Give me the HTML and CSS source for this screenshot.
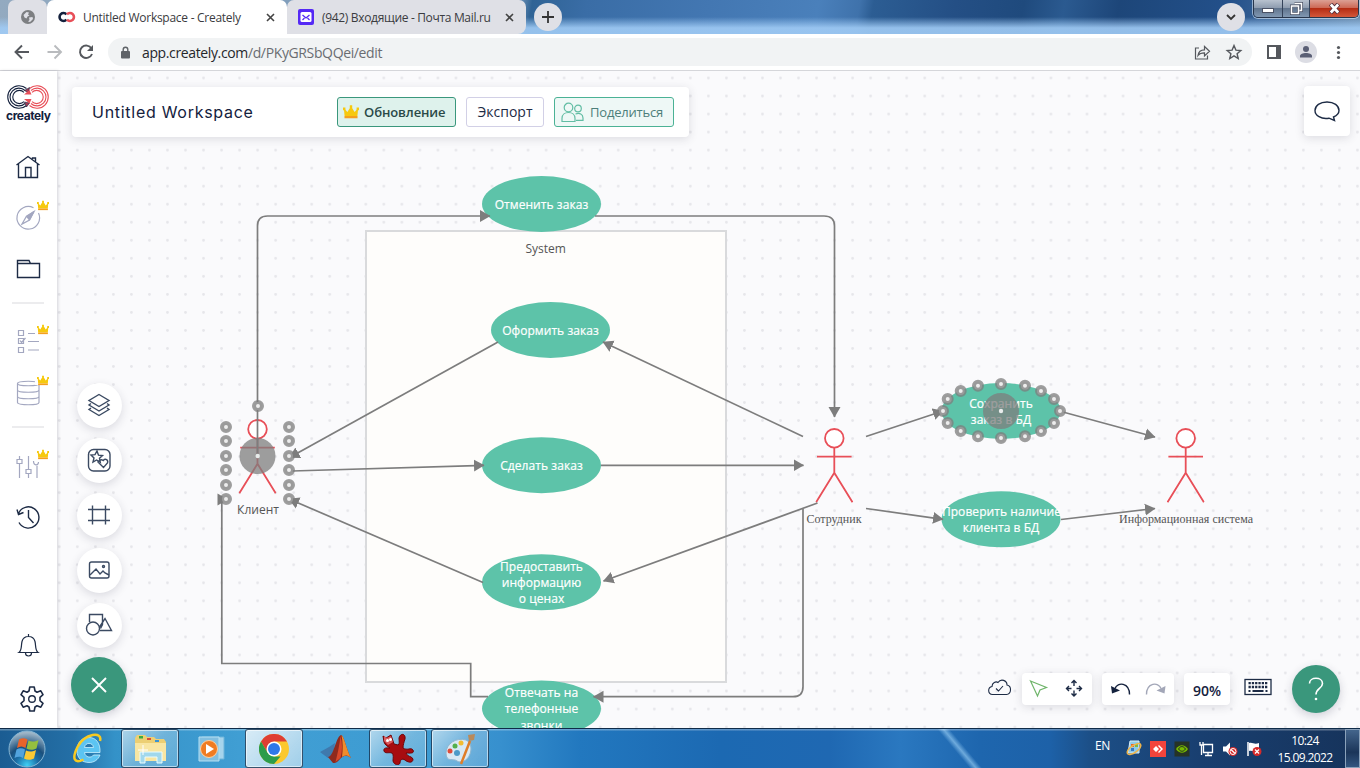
FILE: index.html
```
<!DOCTYPE html>
<html lang="ru">
<head>
<meta charset="utf-8">
<title>Untitled Workspace - Creately</title>
<link rel="stylesheet" href="styles.css">
</head>
<body>
<svg width="0" height="0" class="defs">
  <symbol id="crown" viewBox="0 0 12 10"><path d="M.6 2 3.300 5 6 .6 8.700 5 11.400 2 10.800 8H1.200z" fill="#f6c90e"/><path d="M1.100 8h9.800V9.700H1.100z" fill="#f5a01c"/><path d="M0 1.600h1.800v2H0zM10.200 1.600H12v2h-1.800zM5.100 0h1.800v2H5.100z" fill="#f6c90e"/></symbol>
  <symbol id="person" viewBox="0 0 38 76"><g fill="none" stroke="#e84f58" stroke-width="1.800"><circle cx="19" cy="11" r="9.300" fill="#fff"/><path d="M19 20.300V45.500M1.700 29.300H36.300M.8 75 19 45.500 37.200 75"/></g></symbol>
</svg>
<div class="window">
  <header class="tabs">
    <div class="tab pinned"><svg width="14" height="14"><circle cx="7" cy="7" r="7" fill="#7d7f82"/><path d="M2.500 5l3-3 2.500.5-1 2 1.500 1-2 1-1 2-2-1zM8 7.500l3.500-.5.5 2-3 3-2-.5 1.500-1.500z" fill="#dfe0e6"/></svg></div>
    <div class="tab active">
      <svg width="18" height="12" fill="none" stroke-width="2.600"><path d="M8.500 3.300A4 4 0 1 0 8.500 8.700" stroke="#14213d"/><path d="M9 3.300A4 4 0 1 1 9 8.700" stroke="#e84f58"/></svg>
      <span class="tab-title t1">Untitled Workspace - Creately</span>
      <svg class="close" width="9" height="9"><path d="M1 1l7 7M8 1 1 8" stroke="#444" stroke-width="1.600"/></svg>
    </div>
    <div class="tab mail">
      <svg width="16" height="16"><rect width="16" height="16" rx="2" fill="#5529f5"/><rect x="2.500" y="3" width="11" height="10" rx="1.500" fill="#fff"/><path d="M4.500 6 8 9l3.500-3M4.500 11l2-2M11.500 11l-2-2" fill="none" stroke="#5529f5" stroke-width="1.300"/></svg>
      <span class="tab-title t2">(942) Входящие - Почта Mail.ru</span>
      <svg class="close" width="9" height="9"><path d="M1 1l7 7M8 1 1 8" stroke="#444" stroke-width="1.600"/></svg>
    </div>
    <div class="round plus"><svg width="12" height="12"><path d="M6 0v12M0 6h12" stroke="#333" stroke-width="1.800"/></svg></div>
    <div class="round more"><svg width="10" height="7"><path d="M1 1l4 4 4-4" fill="none" stroke="#333" stroke-width="1.800"/></svg></div>
    <div class="winbtns">
      <div class="wb"><svg width="12" height="5"><rect x=".5" y=".5" width="11" height="4" fill="#fff" stroke="#4b5265"/></svg></div>
      <div class="wb mid"><svg width="13" height="13" fill="none"><path d="M4.500 1.500h7v7h-2M1.500 4h7v7.500h-7z" stroke="#4b5265" stroke-width="3"/><path d="M4.500 1.500h7v7h-2M1.500 4h7v7.500h-7z" stroke="#fff" stroke-width="1.500"/></svg></div>
      <div class="wb x"><svg width="13" height="11"><path d="M2.500 1l8 9M10.500 1l-8 9" stroke="#5b3440" stroke-width="4.500"/><path d="M2.800 1.500l7.400 8M10.200 1.500l-7.400 8" stroke="#fff" stroke-width="2.700"/></svg></div>
    </div>
  </header>

  <div class="toolbar">
    <svg class="nav" width="108" height="36" viewBox="0 34 108 36" fill="none" stroke="#55585d" stroke-width="1.900"><path d="M29 52H16M22 45.500 15.500 52l6.500 6.500"/><path d="M47.500 52h13M54.500 45.500l6.500 6.500-6.500 6.500" stroke="#b9bbbe"/><path d="M91.500 48.500A6.200 6.200 0 1 0 92 54"/><path d="M93 45v6h-6z" fill="#55585d" stroke="none"/></svg>
    <div class="omnibox">
      <svg width="10" height="13"><rect y="5" width="9" height="7.500" rx="1" fill="#5f6368"/><path d="M2.200 5.500V3.500a2.300 2.300 0 0 1 4.600 0v2" fill="none" stroke="#5f6368" stroke-width="1.400"/></svg>
      <span class="url"><b>app.creately.com</b>/d/PKyGRSbQQei/edit</span>
      <svg class="omni-icons" width="54" height="28" viewBox="1190 38 54 28" fill="none" stroke="#55585d" stroke-width="1.200"><path d="M1199 48h-3.500v11h12v-3.500"/><path d="M1198 55.500c.5-4 3-5.700 6.500-5.700V46.500l5 4.800-5 4.600v-3c-3 0-5 .6-6.500 2.600z"/><path d="M1234 45.500l1.900 4.600 4.900.4-3.700 3.200 1.100 4.800-4.200-2.600-4.200 2.600 1.100-4.800-3.700-3.200 4.900-.4z" stroke-width="1.400"/></svg>
    </div>
    <svg width="108" height="36" viewBox="1252 34 108 36"><path d="M1267 45h14v14h-14z" fill="#55585d"/><path d="M1269 47h7v10h-7z" fill="#fff"/><circle cx="1306" cy="52" r="11" fill="#dcdde4"/><circle cx="1306" cy="49" r="3" fill="#5a5f75"/><path d="M1300 57.500v-1.500c0-2 3-3 6-3s6 1 6 3v1.500z" fill="#5a5f75"/><g fill="#55585d"><circle cx="1338.500" cy="47.500" r="1.600"/><circle cx="1338.500" cy="52.500" r="1.600"/><circle cx="1338.500" cy="57.500" r="1.600"/></g></svg>
  </div>

  <main class="app">
    <nav class="rail">
      <div class="brand">
        <svg width="44" height="26" viewBox="6 84 44 26" fill="none" stroke-width="1.100"><g stroke="#14213d"><path d="M26.500 88.500A11.300 11.300 0 1 0 26.500 105.500"/><path d="M25 90.500A8.900 8.900 0 1 0 25 103.500"/><path d="M24 92.300A6.600 6.600 0 1 0 24 101.700"/></g><g stroke="#e84f58"><path d="M29.500 88.500A11.300 11.300 0 1 1 29.500 105.500"/><path d="M31 90.500A8.900 8.900 0 1 1 31 103.500"/><path d="M32 92.300A6.600 6.600 0 1 1 32 101.700"/></g><path d="M24.500 90.500l5-3-1 5.500zM24.500 102l5 1-3 4z" fill="#a53a55" stroke="#14213d" stroke-width=".6"/><path d="M24 94.500h7.500l-2-4.500zM24 99h7.500l-2 4.500z" fill="#e84f58"/></svg>
        <span class="wordmark">creately</span>
      </div>
      <svg class="item dark" viewBox="0 141 57 51"><path d="M16.500 165 28 156.500 39.500 165M18.500 164v13.500h19V164M25.500 177.500v-10h5.500v10M32.500 159v-1h3v4"/></svg>
      <svg class="item pale" viewBox="0 192 57 51"><path d="M38.500 213a11.300 11.300 0 1 1-5-5.200"/><path d="M34 211.500 29.500 220l-7.500 4 4.500-7.800zM26.500 216.200l3 3.500" stroke-width="1.300"/><path d="M34 211.500l-4.500 8.200-2.500-3z" fill="#a3a7c0"/><use href="#crown" x="37" y="200.500" width="12" height="10"/></svg>
      <svg class="item dark" viewBox="0 243 57 51"><path d="M17.500 263v-2.500h11.500l1.500 3h9V277.500h-22zM17.500 263.500h13"/></svg>
      <hr>
      <svg class="item pale" viewBox="0 316 57 51"><path d="M18.500 330.500h5v5h-5zM18.500 338.500h5v5h-5zM18.500 347.500h5v5h-5zM28 333.500h7M28 341.500h11M28 350h11M20 340.500l1.500 2 4-4.500"/><use href="#crown" x="37" y="324.500" width="12" height="10"/></svg>
      <svg class="item pale" viewBox="0 367 57 51"><path d="M17.500 383.500c0-3 21.500-3 21.500 0v19c0 3-21.500 3-21.500 0zM17.500 383.500c0 3 21.500 3 21.500 0M17.500 390c0 3 21.500 3 21.500 0M17.500 396.500c0 3 21.500 3 21.500 0"/><path d="M35 377h12v8H35z" fill="#fff" stroke="none"/><use href="#crown" x="37" y="375.500" width="12" height="10"/></svg>
      <hr>
      <svg class="item pale" viewBox="0 440 57 51"><path d="M19.500 456v3.500M19.500 464v14M28.500 456v13M28.500 474v4M37 466v12M17 459.500h5v4h-5zM26 469.500h5v4h-5zM33.500 461c0 5 5 5 5 1"/><use href="#crown" x="37" y="449.500" width="12" height="10"/></svg>
      <svg class="item dark" viewBox="0 491 57 51"><path d="M19 522.500a10.600 10.600 0 1 0-.5-9M17 509.500l1.500 5 5-2M28.500 510v7.500l5 5.500" stroke-width="1.400"/></svg>
      <span class="push"></span>
      <svg class="item dark" viewBox="0 623 57 51"><path d="M19 652.500c3-2 2-7 3-11 .8-3 3-5 6.500-5s5.700 2 6.500 5c1 4 0 9 3 11zM25.500 653c0 4 6 4 6 0M28.500 636.500v-2.500" stroke-width="1.200"/></svg>
      <svg class="item dark" viewBox="0 674 57 51"><circle cx="32" cy="699" r="3.300"/><path d="M29 691l.8-4h4.400l.8 4 2 1.200 3.800-1.400 2.200 3.900-3 2.600v3.400l3 2.600-2.200 3.900-3.800-1.400-2 1.200-.8 4h-4.400l-.8-4-2-1.200-3.800 1.400-2.200-3.900 3-2.600v-3.400l-3-2.600 2.200-3.900 3.800 1.400z" stroke-linejoin="round" stroke-width="1.600"/></svg>
    </nav>

    <section class="canvas">
      <svg class="diagram" viewBox="57 71 1303 657" width="1303" height="657">
        <defs>
          <marker id="arr" markerUnits="userSpaceOnUse" markerWidth="12" markerHeight="14" refX="10" refY="6.500" orient="auto"><path d="M0 .5 10.500 6.500 0 12.500z" fill="#7d7d7d"/></marker>
          <pattern id="dots" width="18.030" height="18.030" patternUnits="userSpaceOnUse" x="50.300" y="69"><circle cx="9" cy="9" r="1.400" fill="#e6e6ea"/></pattern>
          <clipPath id="clip"><rect x="942" y="490" width="118" height="60"/></clipPath>
        </defs>
        <rect x="57" y="71" width="1303" height="657" fill="url(#dots)"/>
        <rect x="366" y="231" width="360" height="451" fill="#fefdfb" stroke="#d9dadc" stroke-width="2"/>
        <use href="#person" x="815.300" y="427.300" width="38" height="76"/>
        <use href="#person" x="1166.700" y="427.300" width="38" height="76"/>
        <use href="#person" x="238.500" y="418.300" width="38" height="76"/>
        <g fill="#5dc3a9">
          <ellipse cx="541.500" cy="204" rx="59.500" ry="28"/><ellipse cx="550.500" cy="330" rx="59.500" ry="28"/>
          <ellipse cx="541.500" cy="465.200" rx="59.500" ry="28"/><ellipse cx="541.500" cy="582.300" rx="59.500" ry="28"/>
          <ellipse cx="541.500" cy="708.600" rx="59.500" ry="28"/><ellipse cx="1001" cy="411" rx="59.500" ry="28"/>
          <ellipse cx="1001" cy="519.300" rx="59.500" ry="28"/>
        </g>
        <g class="edges">
          <path d="M257.500 456V226q0-10 10-10H490"/><path d="M595 216H824q10.500 0 10.500 10V417"/>
          <path d="M498 342 289.500 457.500"/><path d="M803 436.500 603 342"/><path d="M292 471 484 465.300"/>
          <path d="M601 465.300H803.500"/><path d="M817.500 503 603.500 581"/><path d="M803 509V686.700q0 10-10 10H593.500"/>
          <path d="M483 582.500 289 499"/><path d="M866 436.500 943 411"/><path d="M1061 411.500 1155 437"/>
          <path d="M866 508.500 943 519.300"/><path d="M1061 519.500 1155 508.500"/>
        </g>
        <path d="M488 696.700H470.700V663.500H221.800V499" fill="none" stroke="#7d7d7d" stroke-width="1.700"/><path d="M217.500 493.500 228 499.500l-10.500 6z" fill="#7d7d7d"/>
        <g class="lbl white">
          <text x="541.500" y="208.700">Отменить заказ</text><text x="550.500" y="335">Оформить заказ</text><text x="541.500" y="470">Сделать заказ</text>
          <text x="541.500" y="571">Предоставить</text><text x="541.500" y="587.300">информацию</text><text x="541.500" y="603.300">о ценах</text>
          <text x="541.500" y="697.300">Отвечать на</text><text x="541.500" y="713.300">телефонные</text><text x="541.500" y="729.500">звонки</text>
          <text x="1001" y="408">Сохранить</text><text x="1001" y="424.200">заказ в БД</text>
          <g clip-path="url(#clip)"><text x="1001.500" y="516">Проверить наличие</text></g><text x="1001" y="532.200">клиента в БД</text>
        </g>
        <g class="lbl" fill="#555"><text x="545.700" y="253">System</text><text x="258" y="514">Клиент</text></g>
        <g class="lbl serif" fill="#555"><text x="834" y="523" textLength="55">Сотрудник</text><text x="1186" y="523" textLength="134">Информационная система</text></g>
        <g fill="#7d7d7d" fill-opacity=".75"><circle cx="257.500" cy="456" r="18"/><circle cx="1001" cy="411" r="18"/></g>
        <g fill="#e8eceb"><circle cx="257.700" cy="456" r="2.200"/><circle cx="1001" cy="411" r="2.200"/></g>
        <circle cx="1000" cy="518.500" r=".8" fill="#7d7d7d"/>
        <g class="ports">
          <circle cx="258" cy="406" r="4"/>
          <circle cx="226" cy="427" r="4"/><circle cx="226" cy="441" r="4"/><circle cx="226" cy="456" r="4"/><circle cx="226" cy="470" r="4"/><circle cx="226" cy="485" r="4"/><circle cx="226" cy="499" r="4"/>
          <circle cx="289" cy="427" r="4"/><circle cx="289" cy="441" r="4"/><circle cx="289" cy="456" r="4"/><circle cx="289" cy="470" r="4"/><circle cx="289" cy="485" r="4"/><circle cx="289" cy="499" r="4"/>
          <circle cx="1001" cy="384" r="4"/><circle cx="978" cy="385.700" r="4"/><circle cx="1025" cy="385.700" r="4"/><circle cx="960.700" cy="391" r="4"/><circle cx="1041" cy="391" r="4"/><circle cx="947.700" cy="399" r="4"/><circle cx="1054" cy="399" r="4"/><circle cx="943" cy="411" r="4"/><circle cx="1060" cy="411" r="4"/><circle cx="947.700" cy="423" r="4"/><circle cx="1054" cy="423" r="4"/><circle cx="960.700" cy="431" r="4"/><circle cx="1041" cy="431" r="4"/><circle cx="978" cy="436.300" r="4"/><circle cx="1025" cy="436.300" r="4"/><circle cx="1001" cy="438" r="4"/>
        </g>
      </svg>

      <div class="titlebar">
        <span class="ws-name">Untitled Workspace</span>
        <div class="btn upgrade"><svg width="16" height="14"><use href="#crown" width="16" height="14"/></svg><span>Обновление</span></div>
        <div class="btn export"><span>Экспорт</span></div>
        <div class="btn share"><svg width="23" height="21" fill="none" stroke="#62bda4" stroke-width="1.200"><circle cx="7.500" cy="5.500" r="4.300"/><path d="M1 19.500v-3c0-8 13-8 13 0v3z"/><circle cx="17" cy="6.500" r="3.300"/><path d="M14.500 12c4-1.500 7.500 0 7.500 4v2.300h-7"/></svg><span>Поделиться</span></div>
      </div>

      <div class="chat"><svg width="28" height="22" fill="none" stroke="#1d2b45" stroke-width="1.400"><path d="M20.500 17 21.500 20.500l-5.500-2.300c-8 1.300-14-2.700-14-7.700C2 5.500 7 2 14 2s12 3.500 12 8.500c0 2.500-2 5-5.500 6.500z"/></svg></div>

      <div class="tools">
        <div class="tool"><svg viewBox="77 383 45 45"><path d="M99 394.500 109 400.500 99 406.500 89 400.500zM91 403.500l-2 1.500 10 6 10-6-2-1.500M91 408l-2 1.500 10 6 10-6-2-1.500"/></svg></div>
        <div class="tool"><svg viewBox="77 438 45 45"><rect x="88.500" y="449.500" width="21.500" height="21.500" rx="5"/><path d="M97 451l1.500 4.200 4 .3-3 2.800.8 4-3.700-2.300-3.600 2 1-4-3-3 4-.3z"/><path d="M98 462l5.500 5.500 4-4.500c1-3-2-5-4.300-2.500-1.500-1-3.500-1-5.200 1.500z"/></svg></div>
        <div class="tool"><svg viewBox="77 493 45 45"><path d="M92.500 505.500v19M105.500 505.500v19M88 509.500h22M88 520.500h22"/></svg></div>
        <div class="tool"><svg viewBox="77 548 45 45"><rect x="89.500" y="562" width="19.500" height="16" rx="2"/><path d="M90 575l6-6 4 5 3-3 2 2 4 2"/><circle cx="103.500" cy="566.500" r="1"/></svg></div>
        <div class="tool"><svg viewBox="77 603 45 45"><path d="M89.500 622v-7.500h13v10l-2 4M100 630.500h11.500l-6.500-12-5.500 8.500"/><circle cx="93" cy="628.500" r="6.500"/></svg></div>
        <div class="fab"><svg width="16" height="16"><path d="M1 1l14 14M15 1 1 15" stroke="#fff" stroke-width="1.900"/></svg></div>
      </div>

      <div class="controls">
        <svg class="cloud" width="25" height="32" viewBox="987 673 25 32" fill="none" stroke="#1d2b45" stroke-width="1.100"><path d="M992.500 694.500c-5-.5-5-7-.5-8 0-4 4-5.500 6-4 3-4.500 9-2 9 2.500 5 1 4.500 9-.5 9.500zM996 688.500l2.500 2.500 4.500-5"/></svg>
        <div class="box b1"><svg width="70" height="32" viewBox="1022 673 70 32" fill="none"><path d="M1030.500 681l16 6.500-6.500 2.500-2.500 6z" stroke="#6fb56a" stroke-width="1.200"/><path d="M1074 681v5M1074 690.500v5.500M1067 688.500h4.500M1076.500 688.500h5M1071.500 683l2.500-2.500 2.500 2.500M1071.500 693.500l2.500 2.500 2.500-2.500M1069 686l-2.500 2.500 2.500 2.500M1079 686l2.500 2.500-2.500 2.500" stroke="#1d2b45" stroke-width="1.400"/></svg></div>
        <div class="box b2"><svg width="72" height="32" viewBox="1102 673 72 32" fill="none"><path d="M1129.500 694.500c0-12-12-13-14.500-6" stroke="#14213d" stroke-width="1.400"/><path d="M1111 686l9 4.500-8 3z" fill="#14213d"/><path d="M1146.500 694.500c0-12 12-13 14.500-6" stroke="#a3a7b8" stroke-width="1.400"/><path d="M1165.500 686l-9 4.500 8 3z" fill="#a3a7b8"/></svg></div>
        <div class="box b3">90%</div>
        <svg class="kbd" width="28" height="32" viewBox="1244 673 28 32"><rect x="1245" y="679.500" width="26" height="15" fill="#fff" stroke="#1d2b45" stroke-width="1.300"/><path d="M1248.500 683.200h19M1248.500 687h19" stroke="#1d2b45" stroke-width="2.300" stroke-dasharray="2.300 1"/><path d="M1248.500 691h2M1252.500 691h11M1265.500 691h2" stroke="#1d2b45" stroke-width="2"/></svg>
        <div class="help"><svg width="16" height="24"><path d="M1.500 6.500C1.500-.5 14.500-.5 14.500 6.500c0 5-6.500 5-6.500 11" fill="none" stroke="#fff" stroke-width="1.600"/><circle cx="8" cy="22" r="1.300" fill="#fff"/></svg></div>
      </div>
    </section>
  </main>

  <footer class="taskbar">
    <div class="task start"><svg width="40" height="38"><defs><radialGradient id="orb" cx=".5" cy=".95" r=".9"><stop offset="0" stop-color="#3fd0f5"/><stop offset=".35" stop-color="#1b6ea6"/><stop offset=".6" stop-color="#1a4f7c"/><stop offset="1" stop-color="#9fb6c8"/></radialGradient></defs><circle cx="20" cy="19" r="18" fill="url(#orb)" stroke="#86b6d4"/><path d="M12 9.500c3-2 6-1.500 8.500 0l-2 8.500c-3-2-5.500-2-8.500 0z" fill="#e8642b"/><path d="M21.500 10.500c3 1.500 6 1.500 10-.5l-2 8.500c-4 2-7 1.500-10 0z" fill="#94bf3e"/><path d="M9.500 19.500c3-2 6-1.500 8.500 0l-2 8.500c-3-2-5.500-1.500-8.500 0z" fill="#52a3dd"/><path d="M19 20.500c3 1.500 6 1.500 10-.5l-2 8.500c-4 2-7 1.500-10 0z" fill="#fbc934"/></svg></div>
    <div class="task ie"><svg width="34" height="34"><path d="M6 19C6 10 11 5.500 18 5.500S29.500 11 29 20.500H13.500c.5 5 7 6 9 2.500H29c-2 5-6 7.500-11 7.500-7 0-12-4.500-12-11.500zM13.500 15.500h9c-.5-5.500-8.500-5.500-9 0z" fill="#5cc4f2" fill-rule="evenodd" stroke="#c9f1ff" stroke-width=".8"/><path d="M29 9C32-1 14 1 6.500 15c-6 12-3 17 6 12.500" fill="none" stroke="#f8ca22" stroke-width="2.500"/></svg></div>
    <div class="task on"><svg width="34" height="32"><path d="M2 5l2-3h8l2 2h7l2 2h8l2 3v18H2z" fill="#eccf74"/><path d="M2 10h31v18H2z" fill="#f8e6a3"/><path d="M6 3h4v2.500H6z" fill="#3caa40"/><path d="M14 5h4v2h-4z" fill="#d94b3a"/><path d="M22 7h4v2h-4z" fill="#3994d4"/><path d="M7 30V19h22v11h-5v-6H12v6z" fill="#a1d8ec" stroke="#e8fcff"/><path d="M10 12v10M5 17h10" stroke="#fff"/></svg></div>
    <div class="task"><svg width="28" height="26"><path d="M4 1h22v22H4z" fill="#a6d4ec" stroke="#6db4da"/><path d="M1 1h20v24H1z" fill="#82bfe0" stroke="#b6e0f2"/><circle cx="11" cy="13" r="8.500" fill="#f07c22" stroke="#ffd1a0"/><path d="M8 8l8 5-8 5z" fill="#fff"/></svg></div>
    <div class="task on bright"><svg width="30" height="30" viewBox="-15 -15 30 30"><circle r="15" fill="#fbc82d"/><path d="M-13-7.500A15 15 0 0 1 13-7.500H0L-6.500 3.500z" fill="#df3e33"/><path d="M-13-7.500-6.500 3.500 0 7.500h6.500L0 15A15 15 0 0 1-13-7.500z" fill="#2c9c4b"/><circle r="7.500" fill="#fff"/><circle r="6" fill="#2f78e8"/></svg></div>
    <div class="task"><svg width="32" height="30"><path d="M0 18l9-5 6-4-2 12-5 3z" fill="#3f79ad"/><path d="M8 23c6 0 8-22 13.500-22C25 5 27 17 31 24c-5-4-8-2-11 1-3 4-5 4-7 4z" fill="#8f2a1e"/><path d="M21.500 1C25 5 27 17 31 24c-5-4-7-2-9-1 1-7 1-15-.5-22z" fill="#ef8c2c"/><path d="M20.500 2c2 8 2 14 0 22l-5 4c2-8 4-17 5-26z" fill="#d9482a"/></svg></div>
    <div class="task on red"><svg width="34" height="32"><path d="M2 3l3 2 5-3 3 9 4 1c2-1 1-4 1-7 1-5 7-5 6 1-1 3-2 6-2 9 4 3 8-1 10 2 2 4-4 3-7 3 1 4 6 3 7 6 0 5-6 3-8 1-3-2-5 0-5 3-1 3-6 2-7-2 0-3 1-6-1-8-3-1-7 1-8-2-1-4 4-3 6-3-3-2-5-3-6-6z" fill="#a70c10" stroke="#6c0508"/><path d="M3 3l3 2 4-2 2 6-5 3-4-4z" fill="#d95b5e"/><circle cx="6.500" cy="7.500" r="1.500" fill="#fff"/><circle cx="9.500" cy="6.500" r="1.500" fill="#fff"/></svg></div>
    <div class="task on"><svg width="32" height="32"><path d="M2 20c0-9 10-16 20-13 5 2 6 9 4 14-3 8-10 9-13 7-3-3-11 2-11-8z" fill="#d9e9f4" stroke="#8fb6cf"/><circle cx="6" cy="18" r="2.500" fill="#e04d3a"/><circle cx="11" cy="13" r="2.500" fill="#54b04c"/><circle cx="17" cy="10" r="2.500" fill="#f2bc31"/><circle cx="13" cy="20" r="3" fill="#4d9bc8"/><path d="M17 31 26 8" stroke="#e07d28" stroke-width="2.500"/><path d="M25 8l-1-6 7-1-1 6z" fill="#b98a5b"/></svg></div>
    <div class="tray">
      <span class="lang">EN</span>
      <svg width="142" height="20" viewBox="1124 739 142 20"><path d="M1130 741h9v12h-11z" fill="#8fcbea" stroke="#d8effa"/><path d="M1131 744h3v3h-3z" fill="#e8642b"/><path d="M1135 744h3v3h-3z" fill="#7fba3c"/><path d="M1131 748h3v3h-3z" fill="#3679c6"/><ellipse cx="1134" cy="749" rx="8" ry="3.500" transform="rotate(-35 1134 749)" fill="none" stroke="#f0b54a" stroke-width="1.500"/><path d="M1150 741h16v16h-16z" fill="#f3443c"/><path d="M1153 749l3-3 3 3-3 3zM1158 746l1-1 4 4-4 4-1-1 3-3z" fill="#fff"/><path d="M1174.500 741.500h15v15h-15z" fill="#263326"/><path d="M1176 749c4-6 9-4 12 0-3 5-9 5-12 0z" fill="#76b900"/><path d="M1178.500 749c2-3.500 5-3 7 0-2 3-5 3-7 0z" fill="none" stroke="#263326"/><path d="M1203.500 744.500h9v8h-9zM1205 755.500h7M1208 753v2M1200 742v3h3v-3M1201.500 745v10" fill="none" stroke="#fff" stroke-width="1.300"/><path d="M1223 746.500h3l4-4v13l-4-4h-3z" fill="#fff"/><circle cx="1233" cy="751.500" r="4.500" fill="#d72a2a"/><circle cx="1233" cy="751.500" r="3" fill="none" stroke="#fff"/><path d="M1231 749.500l4 4" stroke="#fff" stroke-width="1.200"/><path d="M1248 742v14" stroke="#fff" stroke-width="1.500"/><path d="M1249 743c4-1 5 2 10 0v8c-4 2-6-1-10 0z" fill="#fff"/><circle cx="1257" cy="751.500" r="4.500" fill="#d72a2a"/><path d="M1255 749.500l4 4M1259 749.500l-4 4" stroke="#fff" stroke-width="1.300"/></svg>
      <div class="clock"><span>10:24</span><span>15.09.2022</span></div>
      <div class="peek"></div>
    </div>
  </footer>
</div>
</body>
</html>
```
FILE: styles.css
```
* { box-sizing: border-box; }
body { margin: 0; font-family: "Open Sans", "Noto Sans", sans-serif; overflow: hidden; }
svg { display: block; flex: none; }
.defs { position: absolute; }
.window { width: 1360px; height: 768px; display: flex; flex-direction: column; background: #fff; }

/* Browser tab strip */
.tabs { height: 34px; flex: none; display: flex; padding-left: 8px;
  background:
    linear-gradient(rgba(150,195,240,0) 50%, rgba(160,203,245,.9) 82%),
    linear-gradient(100deg, #93aac0 0, #7295b8 38%, #2f6395 39%, #3a6da6 43%, #4377b2 52%, #4a80bb 60%, #3f72ab 63%, #2c5d93 64%, #244f85 70%, #1f4a7d 75%, #2b5a90 78%, #1d4679 82%, #23508a 90%, #6b8cad 100%); }
.tab { height: 34px; flex: none; display: flex; align-items: center; background: #dfe0e6; border-radius: 7px 7px 0 0; font-size: 12px; color: #3a3b40; }
.pinned { width: 39px; padding-left: 13px; }
.active { width: 240px; background: #fff; padding-left: 11px; }
.active .tab-title { margin-left: 7px; width: 183px; }
.mail { width: 239px; padding-left: 11px; border-radius: 7px 7px 8px 0; }
.mail .tab-title { margin-left: 8px; width: 183px; }
.tab-title { white-space: nowrap; }
.t1 { letter-spacing: -.27px; }
.t2 { letter-spacing: -.33px; }
.round { width: 28px; height: 28px; border-radius: 50%; background: #dfe0e6; display: flex; align-items: center; justify-content: center; margin-top: 3px; }
.plus { margin-left: 8px; }
.more { margin-left: 655px; }
.winbtns { margin-left: 8px; width: 106px; height: 18px; display: flex; border: 1px solid #28364c; border-top: 0; border-radius: 0 0 5px 5px; overflow: hidden; box-shadow: 0 0 0 1px rgba(220,235,250,.6); }
.wb { width: 29px; display: flex; align-items: center; justify-content: center; background: linear-gradient(#b8c2cf 0, #8f9db0 45%, #61758e 50%, #8198b2 100%); border-right: 1px solid #34435a; }
.wb:first-child { padding-top: 4px; }
.mid { width: 27px; }
.x { flex: 1; border: 0; background: linear-gradient(#dca094 0, #cd6a57 45%, #b52d14 50%, #d3573a 100%); }

/* Address bar */
.toolbar { height: 37px; flex: none; display: flex; border-bottom: 1px solid #d5d6da; background: #fff; }
.omnibox { flex: 1; height: 28px; margin-top: 4px; border-radius: 14px; background: #f1f3f4; display: flex; align-items: center; padding: 0 8px 0 13px; }
.url { margin-left: 11px; font-size: 14px; color: #6a6d72; letter-spacing: -.37px; white-space: nowrap; }
.url b { font-weight: 400; color: #25272b; }
.omni-icons { margin-left: auto; }

/* Left rail */
.app { flex: 1; display: flex; min-height: 0; }
.rail { width: 57px; flex: none; display: flex; flex-direction: column; background: #fff; padding-bottom: 3px; box-shadow: 1px 0 3px rgba(40,40,60,.18); position: relative; z-index: 1; }
.brand { height: 70px; padding: 13px 0 0 6px; }
.wordmark { display: block; font: 700 12px/14px Inter, sans-serif; color: #14213d; letter-spacing: -.42px; margin-top: -1px; }
.item { width: 57px; height: 51px; fill: none; stroke-width: 1.400; }
.item use { stroke: none; }
.dark { stroke: #1d2b45; }
.pale { stroke: #a3a7c0; stroke-width: 1.200; }
.rail hr { width: 32px; height: 2px; margin: 8px 0 12px 12px; border: 0; background: #ececee; }
.push { flex: 1; }

/* Canvas */
.canvas { flex: 1; position: relative; overflow: hidden; background: #fafafc; }
.diagram { position: absolute; left: 0; top: 0; }
.edges path { fill: none; stroke: #7d7d7d; stroke-width: 1.700; marker-end: url(#arr); }
.lbl { font: 12px "Open Sans", "Noto Sans", sans-serif; text-anchor: middle; }
.white { fill: #fff; stroke: #fff; stroke-width: .2px; letter-spacing: .06px; }
.serif { font: 12px "Liberation Serif", serif; }
.ports circle { fill: #ededed; stroke: #7d7d7d; stroke-width: 4; stroke-opacity: .75; }

.titlebar, .chat, .box { background: #fff; border-radius: 4px; box-shadow: 0 2px 10px rgba(50,50,70,.15); }
.titlebar { position: absolute; left: 15px; top: 16px; width: 617px; height: 50px; display: flex; align-items: center; gap: 10px; padding: 0 15px 0 20px; }
.ws-name { flex: 1; font: 400 16px Inter, sans-serif; color: #14213d; letter-spacing: .72px; }
.btn { height: 30px; border: 1px solid; border-radius: 3px; display: flex; align-items: center; white-space: nowrap; font-size: 13px; }
.upgrade { width: 119px; border-color: #3a977c; background: #def2ec; color: #2a4a48; font-weight: 600; padding-left: 5px; gap: 5px; letter-spacing: -.1px; }
.export { width: 78px; border-color: #d2d0e6; color: #1d2b45; font-size: 14px; justify-content: center; line-height: 26px; padding-bottom: 1px; }
.share { width: 120px; border-color: #4bb295; background: #eef8f6; color: #4d7f7a; padding-left: 6px; gap: 6px; letter-spacing: -.2px; }
.chat { position: absolute; left: 1247px; top: 15px; width: 46px; height: 50px; display: flex; align-items: center; justify-content: center; }

.tools { position: absolute; left: 14px; top: 312px; width: 56px; display: flex; flex-direction: column; align-items: center; gap: 10px; }
.tool { width: 45px; height: 45px; border-radius: 50%; background: #fff; box-shadow: 0 3px 10px rgba(40,40,70,.15); }
.tool svg { fill: none; stroke: #3b4a62; stroke-width: 1.400; }
.fab { width: 56px; height: 56px; margin-top: -1px; border-radius: 50%; background: #3a977c; display: flex; align-items: center; justify-content: center; box-shadow: 0 3px 10px rgba(40,40,70,.2); }

.controls { position: absolute; left: 930px; top: 594px; display: flex; align-items: center; height: 48px; }
.box { height: 32px; }
.b1 { margin-left: 10px; }
.b2 { margin-left: 10px; }
.b3 { margin-left: 10px; width: 46px; text-align: center; font-weight: 600; font-size: 14px; line-height: 36px; color: #14213d; letter-spacing: -.1px; }
.kbd { margin-left: 14px; }
.help { width: 48px; height: 48px; margin-left: 20px; border-radius: 50%; background: #3a977c; display: flex; align-items: center; justify-content: center; box-shadow: 0 3px 10px rgba(40,40,70,.2); }

/* Windows taskbar */
.taskbar { height: 40px; flex: none; display: flex; gap: 4px; border-top: 1px solid #0f2b48;
  background:
    linear-gradient(rgba(255,255,255,.3) 0 1px, rgba(255,255,255,0) 2px),
    linear-gradient(50deg, transparent 44%, rgba(160,212,248,.6) 50%, transparent 56%) 925px 0 / 70px 40px no-repeat,
    linear-gradient(90deg, #1b5c92 0, #2470a7 75px, #3492c8 115px, #419fd4 250px, #3d9bd2 430px, #3790ce 500px, #2278bf 580px, #1c69b2 720px, #1f68b2 830px, #2a78c0 900px, #1e66ae 980px, #1d61a8 1050px, #1c4f87 1090px, #193f70 1200px, #16335b 1360px); }
.task { width: 58px; height: 39px; flex: none; display: flex; align-items: center; justify-content: center; }
.start { width: 54px; }
.ie { width: 60px; margin-right: -1px; }
.on { border: 1px solid rgba(15,45,75,.8); border-radius: 3px; box-shadow: inset 0 0 0 1px rgba(255,255,255,.55); background: linear-gradient(135deg, rgba(255,255,255,.6), rgba(255,255,255,.28) 50%, rgba(255,255,255,.18)); }
.bright { background: linear-gradient(135deg, rgba(255,255,255,.8), rgba(255,255,255,.5)); }
.tray { margin-left: auto; display: flex; color: #fff; font-size: 12px; }
.lang { font-size: 12px; line-height: 33px; width: 29px; letter-spacing: -.3px; }
.tray svg { margin-top: 10px; }
.clock { width: 79px; padding-right: 1px; display: flex; flex-direction: column; text-align: center; line-height: 17px; padding-top: 3px; letter-spacing: -.6px; }
.peek { width: 15px; height: 39px; border: 1px solid #8ba2bb; background: linear-gradient(#44658c, #1b3559 60%, #345680); }
```
